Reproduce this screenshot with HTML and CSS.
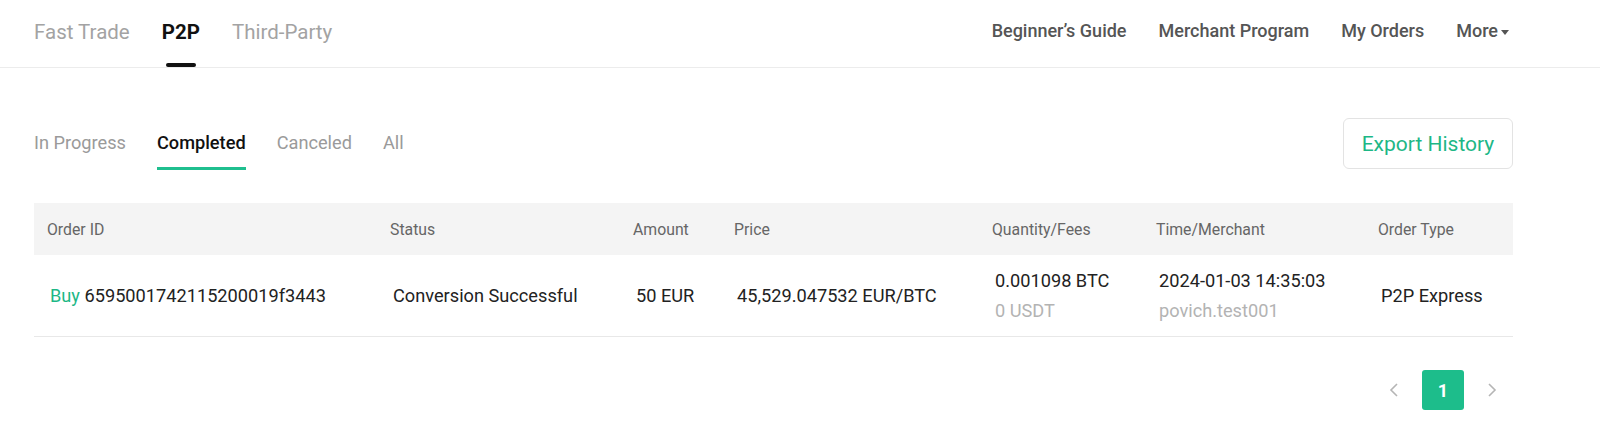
FILE: index.html
```html
<!DOCTYPE html>
<html>
<head>
<meta charset="utf-8">
<link rel="stylesheet" href="styles.css">
</head>
<body>
<header class="topbar">
  <nav class="main-nav">
    <a class="main-item">Fast Trade</a>
    <a class="main-item active">P2P</a>
    <a class="main-item">Third-Party</a>
  </nav>
  <nav class="side-nav">
    <a class="side-item">Beginner’s Guide</a>
    <a class="side-item">Merchant Program</a>
    <a class="side-item">My Orders</a>
    <a class="side-item more">More<span class="caret"></span></a>
  </nav>
</header>
<main class="content">
  <div class="toolbar">
    <div class="tabs">
      <a class="tab">In Progress</a>
      <a class="tab active">Completed</a>
      <a class="tab">Canceled</a>
      <a class="tab">All</a>
    </div>
    <button class="export">Export History</button>
  </div>
  <div class="table">
    <div class="row head">
      <div class="c c-id">Order ID</div>
      <div class="c c-status">Status</div>
      <div class="c c-amount">Amount</div>
      <div class="c c-price">Price</div>
      <div class="c c-qty">Quantity/Fees</div>
      <div class="c c-time">Time/Merchant</div>
      <div class="c c-type">Order Type</div>
    </div>
    <div class="row body">
      <div class="c c-id"><span class="buy">Buy</span> 6595001742115200019f3443</div>
      <div class="c c-status">Conversion Successful</div>
      <div class="c c-amount">50 EUR</div>
      <div class="c c-price">45,529.047532 EUR/BTC</div>
      <div class="c c-qty"><div>0.001098 BTC</div><div class="sub">0 USDT</div></div>
      <div class="c c-time"><div>2024-01-03 14:35:03</div><div class="sub">povich.test001</div></div>
      <div class="c c-type">P2P Express</div>
    </div>
  </div>
  <div class="pager">
    <span class="arrow"><svg width="10" height="16" viewBox="0 0 10 16"><path d="M8 2 L2 8 L8 14" fill="none" stroke="#b5b5b5" stroke-width="1.6"/></svg></span>
    <span class="page current">1</span>
    <span class="arrow"><svg width="10" height="16" viewBox="0 0 10 16"><path d="M2 2 L8 8 L2 14" fill="none" stroke="#b5b5b5" stroke-width="1.6"/></svg></span>
  </div>
</main>
</body>
</html>
```
FILE: styles.css
```css
* { box-sizing: border-box; }
body {
  margin: 0;
  font-family: Roboto, "Liberation Sans", Arial, sans-serif;
  background: #fff;
  color: #222;
}
a { cursor: pointer; }
.topbar {
  height: 68px;
  border-bottom: 1px solid #ececec;
  display: flex;
  justify-content: space-between;
  padding: 0 87px 0 34px;
}
.main-nav { display: flex; gap: 32px; }
.main-item {
  position: relative;
  display: flex;
  align-items: center;
  height: 67px;
  padding-bottom: 4px;
  font-size: 20.5px;
  color: #a3a3a3;
}
.main-item.active { color: #111; font-weight: 700; }
.main-item.active::after {
  content: "";
  position: absolute;
  left: 4px; right: 4px;
  bottom: 0;
  height: 4px;
  border-radius: 2px;
  background: #111;
}
.side-nav { display: flex; gap: 32px; padding-right: 4px; }
.side-item {
  font-size: 18px;
  font-weight: 500;
  color: #555;
  line-height: 61px;
}
.caret {
  display: inline-block;
  margin-left: 3px;
  vertical-align: middle;
  border-left: 4px solid transparent;
  border-right: 4px solid transparent;
  border-top: 5px solid #555;
}
.content { padding: 0 87px 0 34px; }
.toolbar {
  display: flex;
  justify-content: space-between;
  align-items: flex-start;
  padding-top: 50px;
}
.tabs { display: flex; gap: 31px; padding-top: 13px; }
.tab {
  font-size: 18.2px;
  color: #9a9a9a;
  padding-bottom: 12px;
  border-bottom: 3px solid transparent;
  line-height: 24px;
}
.tab.active { color: #111; font-weight: 500; border-bottom-color: #1fbf8f; }
.export {
  width: 170px;
  height: 51px;
  border: 1px solid #e3e3e3;
  border-radius: 6px;
  background: #fff;
  color: #1db786;
  font-family: inherit;
  font-size: 21px;
  padding: 0;
}
.table { margin-top: 33px; }
.row { display: flex; align-items: center; }
.row.head {
  height: 52px;
  background: #f4f4f4;
  font-size: 15.8px;
  color: #666;
}
.row.body {
  height: 82px;
  border-bottom: 1px solid #e8e8e8;
  font-size: 18.2px;
  color: #222;
}
.c { padding-left: 13px; }
.row.body .c { padding-left: 16px; }
.c-id { width: 343px; }
.c-status { width: 243px; }
.c-amount { width: 101px; }
.c-price { width: 258px; }
.c-qty { width: 164px; }
.c-time { width: 222px; }
.c-type { flex: 1; }
.buy { color: #1db786; }
.sub { color: #b3b3b3; margin-top: 9px; }
.pager {
  display: flex;
  justify-content: flex-end;
  align-items: center;
  gap: 18px;
  padding-top: 33px;
  padding-right: 11px;
}
.arrow { width: 20px; display: flex; justify-content: center; }
.page {
  width: 42px;
  height: 40px;
  border-radius: 3px;
  display: flex;
  align-items: center;
  justify-content: center;
  font-size: 18px;
  font-weight: 700;
}
.page.current { background: #1dbd8b; color: #fff; }
```
